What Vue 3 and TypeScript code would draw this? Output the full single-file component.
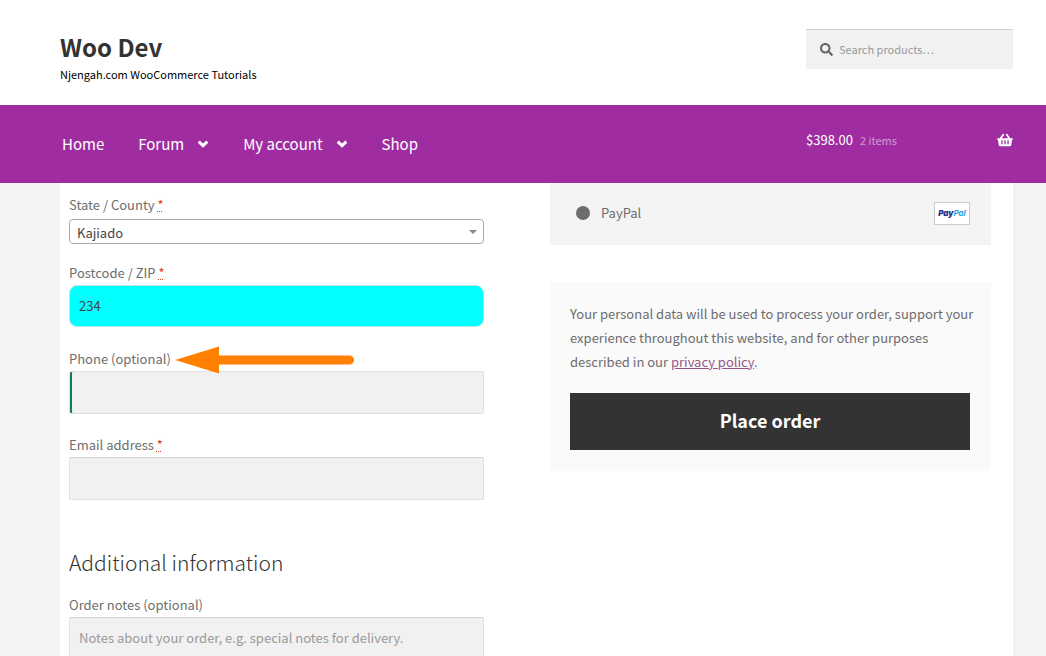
<script setup lang="ts">
import { ref } from 'vue'

interface MenuItem {
  label: string
  children: boolean
}

const menu: MenuItem[] = [
  { label: 'Home', children: false },
  { label: 'Forum', children: true },
  { label: 'My account', children: true },
  { label: 'Shop', children: false },
]

const state = ref('Kajiado')
const postcode = ref('234')
const phone = ref('')
const email = ref('')
const notes = ref('')
const search = ref('')
const payment = ref('paypal')
</script>

<template>
  <div class="site">
    <header class="masthead wrap">
      <div class="branding">
        <h1><a href="#">Woo Dev</a></h1>
        <p>Njengah.com WooCommerce Tutorials</p>
      </div>
      <form class="search" role="search" @submit.prevent>
        <svg viewBox="0 0 512 512" aria-hidden="true">
          <path
            d="M505 442.700 405.300 343c-4.500-4.500-10.600-7-17-7H372c27.600-35.300 44-79.700 44-128C416 93.100 322.900 0 208 0S0 93.100 0 208s93.100 208 208 208c48.300 0 92.700-16.400 128-44v16.300c0 6.400 2.500 12.500 7 17l99.700 99.700c9.400 9.400 24.600 9.400 33.900 0l28.300-28.300c9.400-9.400 9.400-24.600.1-34zM208 336c-70.700 0-128-57.200-128-128 0-70.700 57.200-128 128-128 70.700 0 128 57.200 128 128 0 70.700-57.200 128-128 128z"
          />
        </svg>
        <input v-model="search" type="search" aria-label="Search products" placeholder="Search products…" />
      </form>
    </header>

    <div class="navbar">
      <div class="wrap navbar-inner">
        <nav class="menu" aria-label="Primary">
          <a v-for="item in menu" :key="item.label" href="#">
            {{ item.label }}
            <svg v-if="item.children" viewBox="0 0 12 8" aria-hidden="true">
              <path d="M1.700 1.700 6 5.700 10.300 1.700" />
            </svg>
          </a>
        </nav>
        <a class="cart" href="#">
          <span class="amount">$398.00</span>
          <span class="count">2 items</span>
          <svg viewBox="0 0 576 512" aria-label="View cart">
            <path
              d="M576 216v16c0 13.300-10.700 24-24 24h-8l-26.100 182.800C514.500 462.400 494.300 480 470.400 480H105.600c-23.900 0-44.100-17.600-47.500-41.200L32 256h-8c-13.300 0-24-10.700-24-24v-16c0-13.300 10.700-24 24-24h67.300l106.800-146.800c10.400-14.300 30.400-17.500 44.700-7.100 14.300 10.400 17.500 30.400 7.100 44.700L170.500 192h235.100L326.100 82.800c-10.400-14.300-7.200-34.300 7.100-44.700 14.300-10.400 34.300-7.200 44.700 7.100L484.700 192H552c13.300 0 24 10.700 24 24zM312 392V280c0-13.300-10.700-24-24-24s-24 10.700-24 24v112c0 13.300 10.700 24 24 24s24-10.700 24-24zm112 0V280c0-13.300-10.700-24-24-24s-24 10.700-24 24v112c0 13.300 10.700 24 24 24s24-10.700 24-24zm-224 0V280c0-13.300-10.700-24-24-24s-24 10.700-24 24v112c0 13.300 10.700 24 24 24s24-10.700 24-24z"
            />
          </svg>
        </a>
      </div>
    </div>

    <main class="wrap page">
      <form class="checkout" @submit.prevent>
        <section class="details">
          <div class="field state">
            <label for="state">State / County <abbr title="required">*</abbr></label>
            <div class="select-box">
              <select id="state" v-model="state">
                <option>Kajiado</option>
              </select>
            </div>
          </div>
          <div class="field postcode">
            <label for="postcode">Postcode / ZIP <abbr title="required">*</abbr></label>
            <input id="postcode" v-model="postcode" type="text" />
          </div>
          <div class="field phone">
            <label for="phone">Phone (optional)</label>
            <svg class="arrow" viewBox="0 0 180 28" aria-hidden="true">
              <path d="M0 14 44 .500V9.500H174.500a4.500 4.500 0 0 1 0 9H44V27.500Z" />
            </svg>
            <input id="phone" v-model="phone" type="tel" />
          </div>
          <div class="field">
            <label for="email">Email address <abbr title="required">*</abbr></label>
            <input id="email" v-model="email" type="email" />
          </div>
          <h3>Additional information</h3>
          <div class="field">
            <label for="notes">Order notes (optional)</label>
            <textarea
              id="notes"
              v-model="notes"
              rows="3"
              placeholder="Notes about your order, e.g. special notes for delivery."
            ></textarea>
          </div>
        </section>

        <section class="order">
          <div class="method">
            <input id="paypal" v-model="payment" type="radio" value="paypal" />
            <label for="paypal">PayPal</label>
            <span class="badge"><b>Pay</b><i>Pal</i></span>
          </div>
          <div class="place">
            <p>
              Your personal data will be used to process your order, support your experience throughout this
              website, and for other purposes described in our <a href="#">privacy policy</a>.
            </p>
            <button type="submit">Place order</button>
          </div>
        </section>
      </form>
    </main>
  </div>
</template>

<style>
body {
  margin: 0;
  background: #f2f2f2;
}
</style>

<style scoped>
.site {
  height: 100vh;
  overflow: hidden;
  display: flex;
  flex-direction: column;
  background: linear-gradient(#fff 105px, #f3f3f3 105px);
  color: #6d6d6d;
  font: 13px/24px 'Noto Sans CJK SC', 'Noto Sans', sans-serif;
}
* {
  box-sizing: border-box;
}
a {
  color: inherit;
  text-decoration: none;
}
input,
select,
textarea,
button {
  font: inherit;
}
.wrap {
  margin: 0 33px 0 60px;
}
.masthead {
  display: flex;
  justify-content: space-between;
  align-items: flex-start;
  height: 105px;
  padding-top: 29px;
  flex: none;
}
h1 {
  margin: 0;
  color: #333;
  font-size: 24px;
  line-height: 36px;
  font-weight: 700;
}
.branding p {
  margin: 0;
  color: #000;
  font-size: 11px;
  line-height: 18px;
}
.search {
  display: flex;
  align-items: center;
  gap: 6px;
  width: 207px;
  height: 40px;
  padding: 0 14px;
  background: #f1f1f1;
  border-top: 1px solid #d2d2d2;
}
.search svg {
  width: 13px;
  height: 13px;
  fill: #666;
  flex: none;
}
.search input {
  min-width: 0;
  flex: 1;
  padding: 0 0 2px;
  border: 0;
  background: none;
  font-size: 11px;
  outline: none;
}
::placeholder {
  color: #999;
  opacity: 1;
}
.navbar {
  flex: none;
  background: #9f2da1;
  color: #fff;
}
.navbar-inner {
  display: flex;
  justify-content: space-between;
  height: 78px;
}
.menu {
  display: flex;
  align-items: center;
  gap: 34px;
  padding-left: 2px;
  font-size: 15px;
}
.menu a {
  display: flex;
  align-items: center;
  gap: 13px;
}
.menu svg {
  width: 12px;
  height: 8px;
  fill: none;
  stroke: #fff;
  stroke-width: 3;
}
.cart {
  display: flex;
  align-items: center;
  gap: 7px;
  width: 207px;
  height: 69px;
  font-size: 11px;
}
.amount {
  font-size: 13px;
}
.count {
  opacity: 0.5;
}
.cart svg {
  width: 16px;
  height: 14px;
  margin-left: auto;
  fill: #fff;
}
.page {
  flex: 1;
  min-height: 0;
  padding: 0 22px 0 9px;
  background: #fff;
}
.checkout {
  display: grid;
  grid-template-columns: 415fr 441fr;
  column-gap: 66px;
  align-items: start;
}
.details {
  padding-top: 10px;
}
.field {
  position: relative;
  margin-bottom: 19px;
}
.field label {
  display: block;
}
abbr {
  color: #e2401c;
  text-decoration: underline dotted 1px;
}
.field > input,
textarea {
  display: block;
  width: 100%;
  height: 43px;
  padding: 0 9px;
  border: 1px solid #e0e0e0;
  border-top-color: #d2d2d2;
  border-radius: 2px;
  background: #f1f1f1;
  color: #43454b;
}
textarea {
  height: 90px;
  padding-top: 8px;
  resize: none;
}
.state {
  margin-bottom: 17px;
}
.select-box {
  position: relative;
  margin-top: 2px;
}
.select-box::after {
  content: '';
  position: absolute;
  right: 7px;
  top: 11px;
  border: solid transparent;
  border-width: 4px 4px 0;
  border-top-color: #888;
  pointer-events: none;
}
select {
  display: block;
  width: 100%;
  height: 25px;
  padding: 1px 7px 0;
  border: 1px solid #aaa;
  border-radius: 4px;
  appearance: none;
  background: #fff;
  color: #444;
}
.field.postcode {
  margin-bottom: 20px;
}
.postcode > input {
  height: 42px;
  padding-bottom: 2px;
  border-radius: 8px;
  border-color: #b8e6e6;
  background: #0ff;
}
.phone > input {
  border-top-color: #e0e0e0;
  box-shadow: inset 2px 0 0 #0f834d;
}
.arrow {
  position: absolute;
  left: 106px;
  top: -1px;
  width: 180px;
  height: 28px;
  fill: #ff8000;
}
h3 {
  margin: 46px 0 15px;
  color: #333;
  font-size: 21px;
  line-height: 32px;
  font-weight: 300;
}
.method {
  display: flex;
  align-items: center;
  height: 62px;
  padding: 0 21px 2px 26px;
  background: #f4f4f4;
}
.method input {
  appearance: none;
  width: 14px;
  height: 14px;
  margin: 0 11px 0 0;
  border-radius: 50%;
  background: #6d6d6d;
}
.badge {
  display: flex;
  align-items: center;
  justify-content: center;
  width: 36px;
  height: 23px;
  margin-left: auto;
  border: 1px solid #ccc;
  background: #fff;
  font: italic 700 8px/20px Inter, sans-serif;
  color: #1f2f86;
}
.badge i {
  color: #2a9fe0;
}
.place {
  margin-top: 37px;
  padding: 20px 21px 21px 20px;
  background: #fafafa;
}
.place p {
  margin: 0 -10px 19px 0;
}
.place a {
  color: #96588a;
  text-decoration: underline;
}
button {
  display: block;
  width: 100%;
  height: 57px;
  padding: 0 0 3px;
  border: 0;
  background: #333;
  color: #fff;
  font-size: 18px;
  font-weight: 700;
}
</style>
